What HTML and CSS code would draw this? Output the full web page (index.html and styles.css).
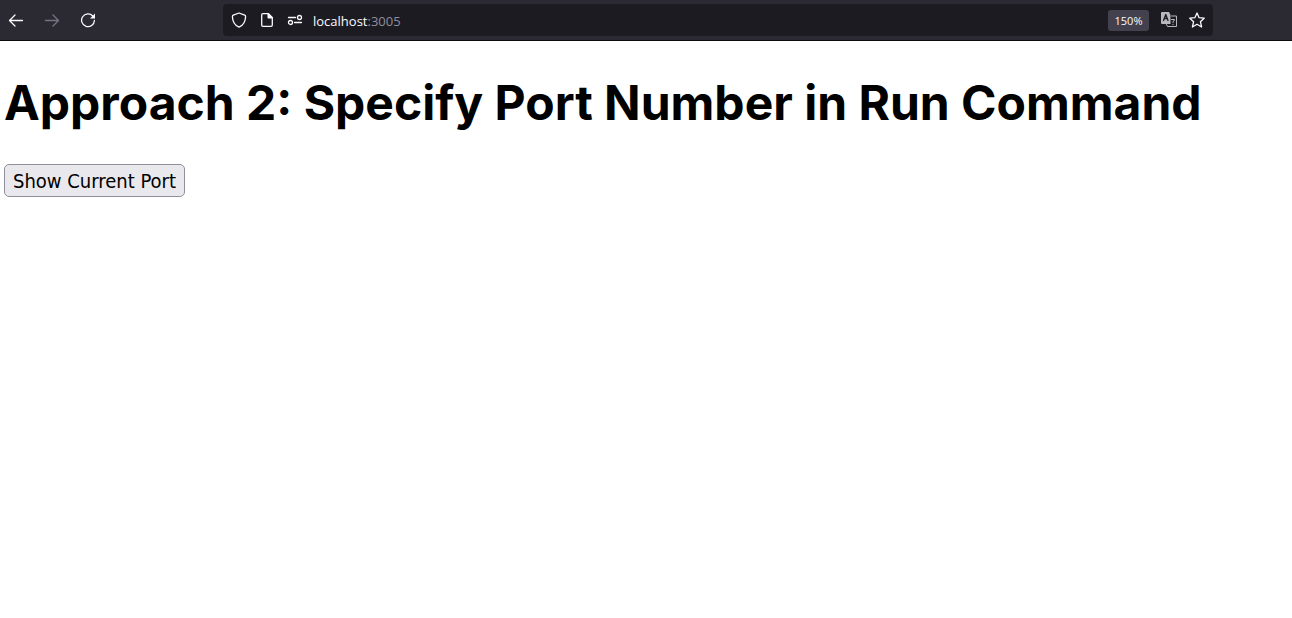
FILE: index.html
```html
<!DOCTYPE html>
<html lang="en">
<head>
<meta charset="utf-8">
<title>localhost:3005</title>
<link rel="stylesheet" href="styles.css">
</head>
<body>
<header class="toolbar">
  <nav class="nav" aria-label="Navigation">
    <button class="icon-button" type="button" aria-label="Back"><svg class="icon" viewBox="0 0 16 16"><path d="M14.500 8.500H1.500M7 3 1.500 8.500 7 14"/></svg></button>
    <button class="icon-button" type="button" aria-label="Forward" disabled><svg class="icon" viewBox="0 0 16 16"><path d="M1.500 8.500h13M9 3 14.500 8.500 9 14"/></svg></button>
    <button class="icon-button" type="button" aria-label="Reload"><svg class="icon" viewBox="0 0 16 16"><path d="M12.800 4A6.400 6.400 0 1 0 14.400 8.500"/><path class="solid" d="M15 1.500V6.500H10Z"/></svg></button>
  </nav>
  <div class="address">
    <button class="icon-button" type="button" aria-label="Tracking protection"><svg class="icon" viewBox="0 0 16 16"><path d="M8 1 13.700 3.200Q14.600 3.600 14.600 4.600C14.500 9.800 12 13.500 8 15.200 4 13.500 1.500 9.800 1.400 4.600Q1.400 3.600 2.300 3.200Z"/></svg></button>
    <button class="icon-button" type="button" aria-label="Site information"><svg class="icon" viewBox="0 0 16 16"><path d="M9.500 1.700H4Q2.700 1.700 2.700 3V13Q2.700 14.300 4 14.300H12Q13.300 14.300 13.300 13V5.500Z"/><path class="solid" d="M8.500 1.500H9.500L13.500 5.500V6.500H9.500Q8.500 6.500 8.500 5.500Z"/></svg></button>
    <button class="icon-button" type="button" aria-label="Permissions"><svg class="icon" viewBox="0 0 16 16"><path d="M1.500 5.500H8.500M7.500 10.500H14.500"/><circle cx="12.500" cy="5.500" r="2"/><circle cx="3.500" cy="10.500" r="2"/></svg></button>
    <a class="url" href="#"><span class="host">localhost</span>:3005</a>
    <button class="zoom" type="button">150%</button>
    <button class="icon-button translate" type="button" aria-label="Translate"><svg class="icon" viewBox="0 0 16 16"><path class="tile" d="M1 0H8L9.500 3V12H1Q0 12 0 11V1Q0 0 1 0Z"/><path class="letter" d="M2.500 8.500 4.800 2.500 7 8.500M3.500 6.500H6"/><path class="card" d="M10.500 4H15.500V14.500H6.500L5.500 12.500"/><path class="glyph" d="M10.500 7.500H13.500Q13.500 9 12 9.500V10.500M12 12.300V12.700"/></svg></button>
    <button class="icon-button" type="button" aria-label="Bookmark"><svg class="icon" viewBox="0 0 16 16"><path d="M8 1 10.100 5.700 15.200 6.200 11.400 9.700 12.600 15 8 12.300 3.400 15 4.600 9.700 0.800 6.200 5.900 5.700Z"/></svg></button>
  </div>
</header>
<main class="page">
  <h1 class="title">Approach 2: Specify Port Number in Run Command</h1>
  <button class="show-port" type="button">Show Current Port</button>
</main>
</body>
</html>
```

FILE: styles.css
```css
body {
  margin: 0;
  background: #fff;
  color: #000;
  font-family: Inter, sans-serif;
}

.toolbar {
  display: flex;
  align-items: center;
  height: 40px;
  background: #2b2a33;
  border-bottom: 1px solid #0c0c0d;
}

.nav {
  display: flex;
  flex: none;
  gap: 20px;
  width: 215px;
  padding-left: 8px;
}

.icon-button {
  display: flex;
  flex: none;
  padding: 0;
  border: 0;
  background: none;
  color: #fbfbfe;
}

.icon-button:disabled {
  color: #75747f;
}

.icon {
  width: 16px;
  height: 16px;
  fill: none;
  stroke: currentColor;
  stroke-width: 1.3;
  stroke-linecap: round;
  stroke-linejoin: round;
}

.solid {
  fill: currentColor;
  stroke: none;
}

.address {
  display: flex;
  flex: 1;
  align-items: center;
  gap: 12px;
  height: 32px;
  margin-right: 79px;
  padding: 0 8px;
  border-radius: 4px;
  box-sizing: border-box;
  background: #1c1b22;
}

.url {
  flex: 1;
  margin-left: -2px;
  padding-top: 2px;
  color: #8f8f9d;
  font: 13px/20px "Open Sans", sans-serif;
  text-decoration: none;
}

.host {
  color: #fbfbfe;
}

.zoom {
  width: 41px;
  height: 21px;
  padding: 1px 0 0;
  border: 0;
  border-radius: 3px;
  background: #42414d;
  color: #fbfbfe;
  font: 11px/20px "Open Sans", sans-serif;
}

.translate {
  color: #b8b8be;
}

.tile {
  fill: currentColor;
  stroke: none;
}

.letter {
  stroke: #1c1b22;
}

.card,
.glyph {
  stroke-width: 1;
}

.page {
  padding: 32px 4px;
}

.title {
  margin: 0 0 32px;
  font-size: 48px;
  font-weight: 700;
  line-height: 59px;
}

.show-port {
  display: block;
  padding: 3px 8px 2px;
  border: 1px solid #8f8f9d;
  border-radius: 5px;
  background: #e9e9ed;
  color: #000;
  font: 20px/26px "DejaVu Sans Condensed", "DejaVu Sans", sans-serif;
}
```
